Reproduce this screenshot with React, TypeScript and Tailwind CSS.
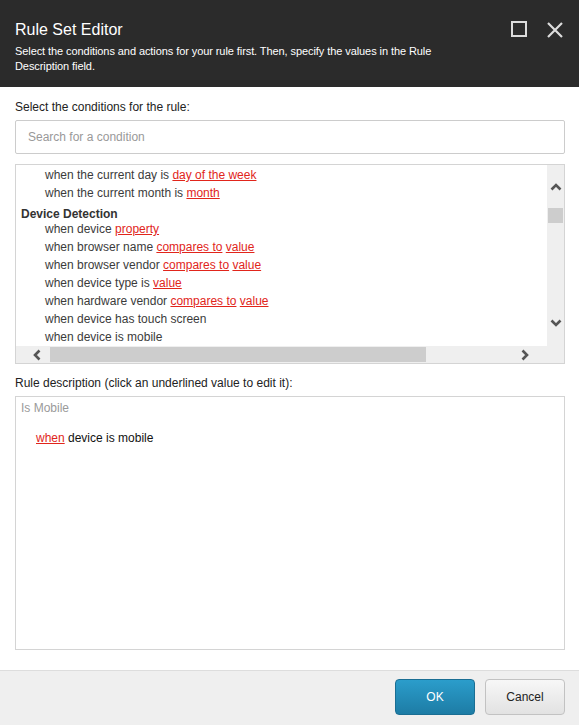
import React from 'react';

type Part = [string, boolean];
type Row = { cat?: boolean; parts: Part[] };

const rows: Row[] = [
  { parts: [['when the current day is ', false], ['day of the week', true]] },
  { parts: [['when the current month is ', false], ['month', true]] },
  { cat: true, parts: [['Device Detection', false]] },
  { parts: [['when device ', false], ['property', true]] },
  { parts: [['when browser name ', false], ['compares to', true], [' ', false], ['value', true]] },
  { parts: [['when browser vendor ', false], ['compares to', true], [' ', false], ['value', true]] },
  { parts: [['when device type is ', false], ['value', true]] },
  { parts: [['when hardware vendor ', false], ['compares to', true], [' ', false], ['value', true]] },
  { parts: [['when device has touch screen', false]] },
  { parts: [['when device is mobile', false]] },
];

const Chevron = ({ dir }: { dir: 'up' | 'down' | 'left' | 'right' }) => {
  const d = {
    up: 'M1.5 8.5 L6 4 L10.5 8.5',
    down: 'M1.5 3.5 L6 8 L10.5 3.5',
    left: 'M8.5 1.5 L4 6 L8.5 10.5',
    right: 'M3.5 1.5 L8 6 L3.5 10.5',
  }[dir];
  return (
    <svg width="12" height="12" viewBox="0 0 12 12">
      <path d={d} fill="none" stroke="#555" strokeWidth="2.6" />
    </svg>
  );
};

const RuleText = ({ parts }: { parts: Part[] }) => (
  <>
    {parts.map(([t, link], i) =>
      link ? (
        <span key={i} className="text-[#e1251b] underline">
          {t}
        </span>
      ) : (
        <span key={i} className="whitespace-pre">{t}</span>
      )
    )}
  </>
);

export default function App() {
  return (
    <div className="w-[579px] h-[725px] flex flex-col bg-white text-[12px] font-['Liberation_Sans',Arial,sans-serif] overflow-hidden">
      {/* header */}
      <div className="h-[87px] bg-[#2b2b2b] flex items-start pl-[15px] pr-[16px] shrink-0">
        <div className="flex-1 pt-[20px]">
          <div className="text-[16px] leading-[20px] text-white">Rule Set Editor</div>
          <div className="mt-[4px] w-[470px] text-[11px] tracking-[-0.08px] leading-[15px] text-white">
            Select the conditions and actions for your rule first. Then, specify the values in the Rule Description field.
          </div>
        </div>
        <div className="flex items-start gap-[20px] pt-[21px]">
          <svg width="16" height="16" viewBox="0 0 16 16">
            <rect x="1" y="1" width="14" height="14" fill="none" stroke="#dcdcdc" strokeWidth="2" />
          </svg>
          <svg width="16" height="16" viewBox="0 0 16 16" className="mt-[1px]">
            <path d="M1 1 L15 15 M15 1 L1 15" stroke="#dcdcdc" strokeWidth="2.2" />
          </svg>
        </div>
      </div>

      {/* body */}
      <div className="flex-1 flex flex-col pl-[15px] pr-[14px] pt-[13px]">
        <div className="leading-[14px] text-[#222]">Select the conditions for the rule:</div>
        <div className="mt-[6px] h-[34px] border border-[#cccccc] rounded-[2px] flex items-center pl-[12px] text-[#999]">
          Search for a condition
        </div>

        <div className="mt-[10px] h-[200px] border border-[#d4d4d4] grid grid-cols-[1fr_17px] grid-rows-[1fr_17px]">
          <div className="overflow-hidden pt-[1px] text-[#3b3b3b]">
            {rows.map((r, i) =>
              r.cat ? (
                <div key={i} className="pt-[7px] pl-[5px] leading-[11px] font-bold text-[#333]">
                  <RuleText parts={r.parts} />
                </div>
              ) : (
                <div key={i} className="pl-[29px] leading-[18px] whitespace-nowrap">
                  <RuleText parts={r.parts} />
                </div>
              )
            )}
          </div>
          <div className="bg-[#efefef] flex flex-col items-center">
            <div className="mt-[13px] h-[18px] flex items-center justify-center">
              <Chevron dir="up" />
            </div>
            <div className="mt-[12px] w-[15px] h-[15px] bg-[#cdcdcd]" />
            <div className="flex-1" />
            <div className="mb-[14px] h-[18px] flex items-center justify-center">
              <Chevron dir="down" />
            </div>
          </div>
          <div className="bg-[#efefef] flex items-center">
            <div className="ml-[12px] w-[18px] flex items-center justify-center">
              <Chevron dir="left" />
            </div>
            <div className="ml-[4px] w-[376px] h-[15px] bg-[#cdcdcd]" />
            <div className="flex-1" />
            <div className="mr-[13px] w-[18px] flex items-center justify-center">
              <Chevron dir="right" />
            </div>
          </div>
          <div className="bg-[#efefef]" />
        </div>

        <div className="mt-[12px] leading-[14px] text-[#222]">
          Rule description (click an underlined value to edit it):
        </div>
        <div className="mt-[6px] h-[254px] border border-[#d4d4d4] pt-[4px] pl-[5px]">
          <div className="leading-[14px] text-[#9a9a9a]">Is Mobile</div>
          <div className="mt-[16px] pl-[15px] leading-[14px] text-[#111]">
            <RuleText parts={[['when', true], [' device is mobile', false]]} />
          </div>
        </div>
      </div>

      {/* footer */}
      <div className="h-[55px] shrink-0 bg-[#efefef] border-t border-[#dddddd] flex items-start justify-end gap-[10px] pt-[8px] pr-[14px]">
        <button className="w-[80px] h-[36px] rounded-[4px] border border-[#1a6e93] bg-gradient-to-b from-[#2b9dcb] to-[#1d7ca5] text-white text-[12px]">
          OK
        </button>
        <button className="w-[80px] h-[36px] rounded-[4px] border border-[#c2c2c2] bg-gradient-to-b from-[#f7f7f7] to-[#e2e2e2] text-[#222] text-[12px]">
          Cancel
        </button>
      </div>
    </div>
  );
}
